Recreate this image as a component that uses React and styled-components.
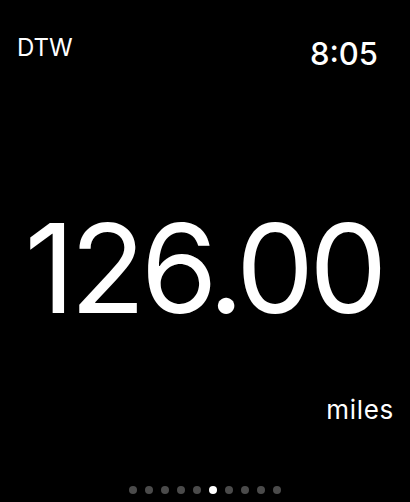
import React from "react";
import styled, { createGlobalStyle } from "styled-components";

const Global = createGlobalStyle`
  html, body { margin: 0; padding: 0; background: #000; }
  #root { height: 502px; }
`;

const Screen = styled.div`
  height: 502px;
  width: 410px;
  background: #000;
  color: #fff;
  font-family: Inter, "Noto Sans", sans-serif;
  display: flex;
  flex-direction: column;
  box-sizing: border-box;
  overflow: hidden;
`;

const TopBar = styled.div`
  display: flex;
  justify-content: space-between;
  align-items: flex-start;
  padding: 36px 32px 0 17px;
`;

const Place = styled.div`
  font-size: 24px;
  line-height: 24px;
  font-weight: 400;
`;

const Clock = styled.div`
  font-size: 31px;
  line-height: 31px;
  font-weight: 500;
  margin-top: 2px;
`;

const Main = styled.div`
  flex: 1;
  display: flex;
  align-items: center;
  justify-content: center;
  padding-top: 70px;
`;

const Value = styled.div`
  font-size: 124px;
  line-height: 124px;
  font-weight: 400;
  letter-spacing: -5px;
  margin-right: 3px;
`;

const UnitRow = styled.div`
  display: flex;
  justify-content: flex-end;
  padding: 0 16px 0 0;
`;

const Unit = styled.div`
  font-size: 26px;
  line-height: 26px;
  letter-spacing: 0.7px;
`;

const Dots = styled.div`
  display: flex;
  justify-content: center;
  gap: 8px;
  padding: 63px 0 8px;
`;

const Dot = styled.span`
  width: 8px;
  height: 8px;
  border-radius: 50%;
  background: ${(p) => (p.$active ? "#fff" : "#4b4b4b")};
`;

export default function App() {
  const pages = Array.from({ length: 10 }, (_, i) => i);
  return (
    <>
      <Global />
      <Screen>
        <TopBar>
          <Place>DTW</Place>
          <Clock>8:05</Clock>
        </TopBar>
        <Main>
          <Value>126.00</Value>
        </Main>
        <UnitRow>
          <Unit>miles</Unit>
        </UnitRow>
        <Dots>
          {pages.map((i) => (
            <Dot key={i} $active={i === 5} />
          ))}
        </Dots>
      </Screen>
    </>
  );
}
